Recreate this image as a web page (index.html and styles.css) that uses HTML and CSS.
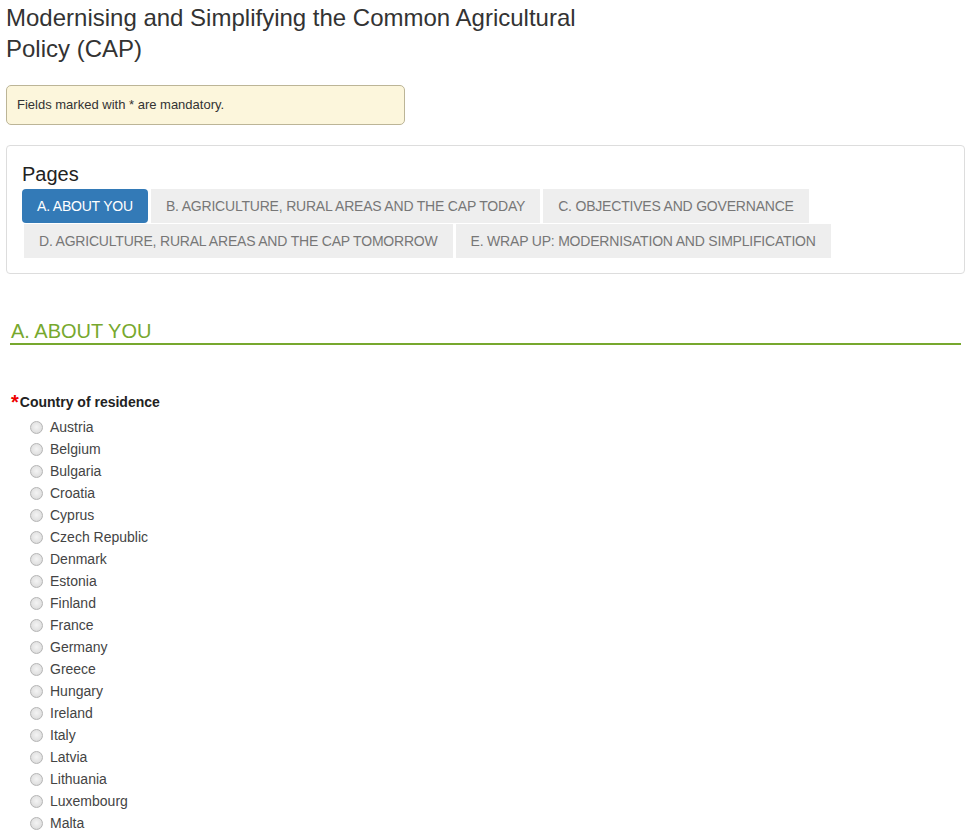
FILE: index.html
```html
<!DOCTYPE html>
<html lang="en">
<head>
<meta charset="utf-8">
<title>Modernising and Simplifying the Common Agricultural Policy (CAP)</title>
<link rel="stylesheet" href="styles.css">
</head>
<body>
<div class="page">
  <h1 class="title">Modernising and Simplifying the Common Agricultural Policy (CAP)</h1>
  <div class="alert">Fields marked with * are mandatory.</div>
  <div class="panel">
    <div class="panel-title">Pages</div>
    <ul class="pills">
      <li class="pill active">A. ABOUT YOU</li>
      <li class="pill">B. AGRICULTURE, RURAL AREAS AND THE CAP TODAY</li>
      <li class="pill">C. OBJECTIVES AND GOVERNANCE</li>
      <li class="pill">D. AGRICULTURE, RURAL AREAS AND THE CAP TOMORROW</li>
      <li class="pill">E. WRAP UP: MODERNISATION AND SIMPLIFICATION</li>
    </ul>
  </div>
  <h2 class="section">A. ABOUT YOU</h2>
  <div class="question">
    <div class="qlabel"><span class="req">*</span>Country of residence</div>
    <ul class="options">
      <li><label><input type="radio" name="country"><span>Austria</span></label></li>
      <li><label><input type="radio" name="country"><span>Belgium</span></label></li>
      <li><label><input type="radio" name="country"><span>Bulgaria</span></label></li>
      <li><label><input type="radio" name="country"><span>Croatia</span></label></li>
      <li><label><input type="radio" name="country"><span>Cyprus</span></label></li>
      <li><label><input type="radio" name="country"><span>Czech Republic</span></label></li>
      <li><label><input type="radio" name="country"><span>Denmark</span></label></li>
      <li><label><input type="radio" name="country"><span>Estonia</span></label></li>
      <li><label><input type="radio" name="country"><span>Finland</span></label></li>
      <li><label><input type="radio" name="country"><span>France</span></label></li>
      <li><label><input type="radio" name="country"><span>Germany</span></label></li>
      <li><label><input type="radio" name="country"><span>Greece</span></label></li>
      <li><label><input type="radio" name="country"><span>Hungary</span></label></li>
      <li><label><input type="radio" name="country"><span>Ireland</span></label></li>
      <li><label><input type="radio" name="country"><span>Italy</span></label></li>
      <li><label><input type="radio" name="country"><span>Latvia</span></label></li>
      <li><label><input type="radio" name="country"><span>Lithuania</span></label></li>
      <li><label><input type="radio" name="country"><span>Luxembourg</span></label></li>
      <li><label><input type="radio" name="country"><span>Malta</span></label></li>
    </ul>
  </div>
</div>
</body>
</html>
```
FILE: styles.css
```css
html, body {
  margin: 0;
  padding: 0;
  background: #fff;
}
body {
  font-family: "Liberation Sans", Arial, sans-serif;
  color: #333;
  font-size: 14px;
  line-height: 20px;
}
.page {
  padding: 2px 4px 0 6px;
}
.title {
  margin: 0;
  max-width: 600px;
  font-size: 24px;
  line-height: 31px;
  font-weight: normal;
  color: #333;
}
.alert {
  margin-top: 21px;
  width: 377px;
  padding: 10px;
  font-size: 13px;
  line-height: 18px;
  background: #fcf6dc;
  border: 1px solid #bcb597;
  border-radius: 5px;
}
.panel {
  margin-top: 20px;
  border: 1px solid #ddd;
  border-radius: 4px;
  padding: 15px;
}
.panel-title {
  font-size: 20px;
  line-height: 28px;
  color: #222;
  margin-top: -1px;
  margin-bottom: 1px;
}
.pills {
  list-style: none;
  margin: 0;
  padding: 0;
  display: flex;
  flex-wrap: wrap;
  row-gap: 1px;
}
.pill {
  background: #eee;
  color: #777;
  padding: 7px 15px;
  line-height: 20px;
  font-size: 14px;
  letter-spacing: -0.2px;
  margin: 0 1px 0 2px;
  height: 20px;
}
.pill:first-child {
  margin-left: 0;
}
.pill.active {
  background: #337ab7;
  color: #fff;
  border-radius: 4px;
}
.section {
  margin: 45px 4px 0 4px;
  font-size: 20px;
  font-weight: normal;
  line-height: 24px;
  color: #77a82e;
  padding-bottom: 0;
  border-bottom: 2px solid #77a82e;
  padding-left: 1px;
}
.question {
  margin-top: 47px;
  padding-left: 5px;
}
.qlabel {
  font-weight: bold;
  font-size: 14px;
  line-height: 20px;
  color: #222;
}
.req {
  color: #e00;
  font-size: 20px;
  font-weight: bold;
  margin-right: 1px;
  vertical-align: -2px;
}
.options {
  list-style: none;
  margin: 4px 0 0 0;
  padding: 0 0 0 19px;
}
.options li {
  height: 22px;
}
.options label {
  display: flex;
  align-items: center;
  height: 22px;
  color: #444;
  font-size: 14px;
}
.options input {
  appearance: none;
  -webkit-appearance: none;
  margin: 0 7px 0 0;
  width: 13px;
  height: 13px;
  border-radius: 50%;
  border: 1px solid #b5b5b5;
  background: radial-gradient(circle at 50% 45%, #f4f4f4 0%, #e2e2e2 60%, #cfcfcf 100%);
  box-sizing: border-box;
  flex: none;
}
```
